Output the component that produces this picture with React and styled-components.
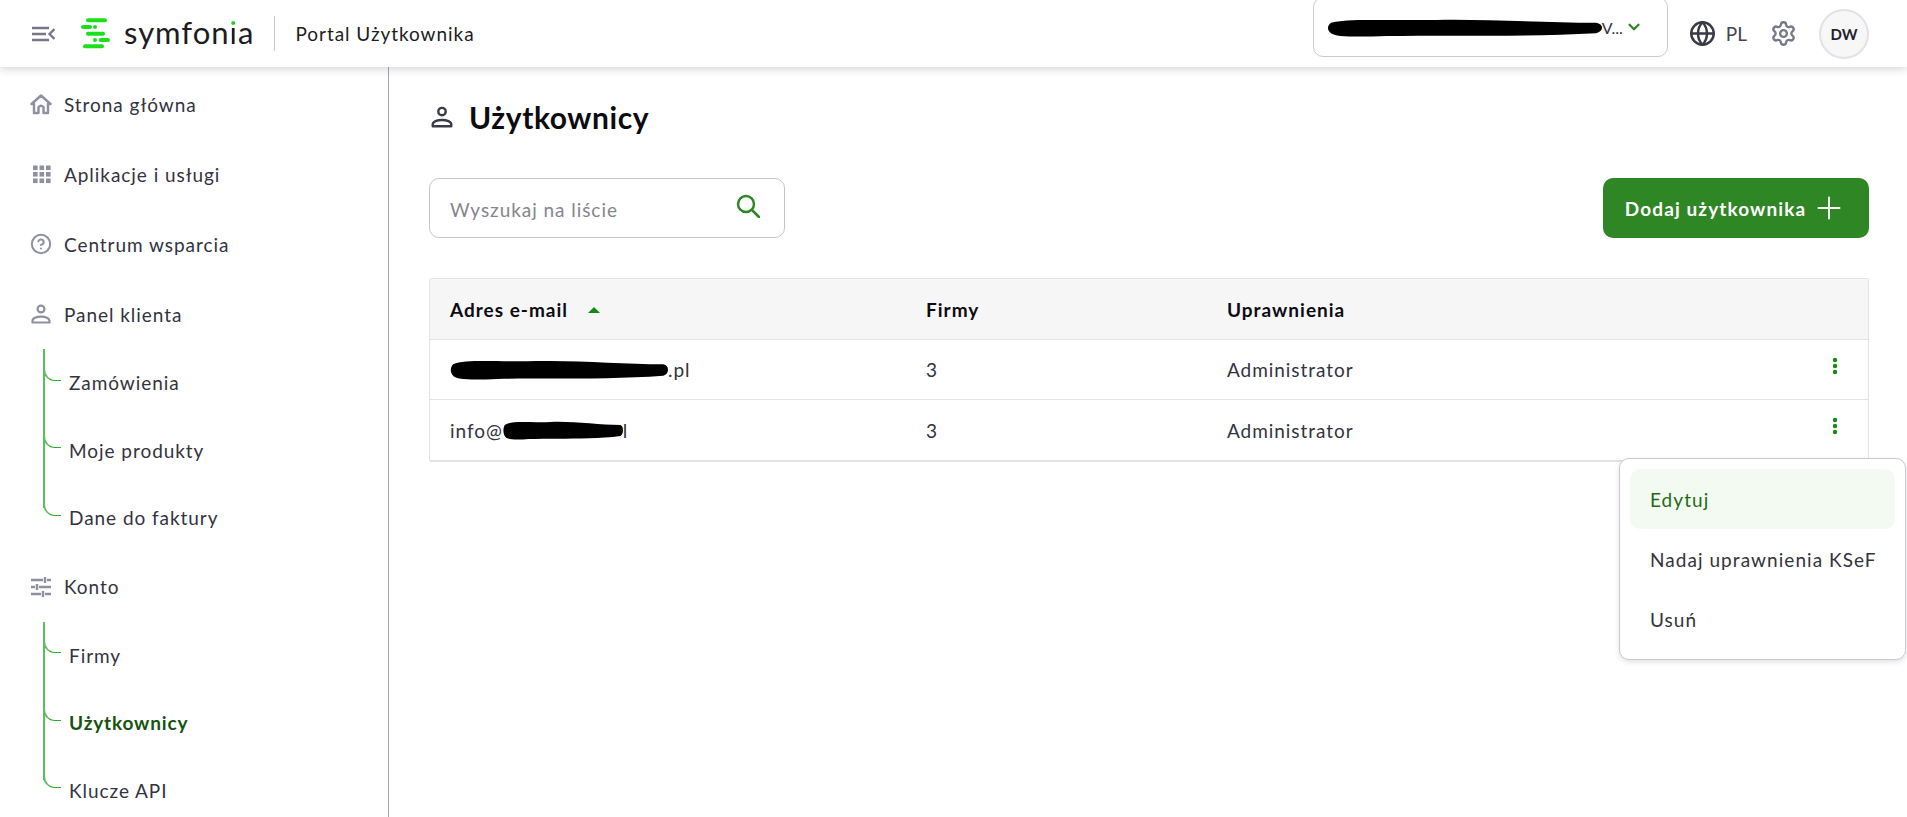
import React from "react";
import styled, { createGlobalStyle } from "styled-components";
import { ChevronDown, CircleHelp, Globe, Plus, Settings } from "lucide-react";

const FONT = `"Lato", "Noto Sans", sans-serif`;

const Global = createGlobalStyle`
  html, body { margin: 0; padding: 0; height: 100%; overflow: hidden; background: #fff; }
  body { font-family: ${FONT}; color: #2c2c36; }
  * { box-sizing: border-box; }
`;

const Page = styled.div`
  height: 100vh;
  display: flex;
  flex-direction: column;
  overflow: hidden;
`;

const Header = styled.header`
  flex: 0 0 67px;
  height: 67px;
  display: flex;
  align-items: center;
  padding: 0 38px 0 32px;
  background: #fff;
  box-shadow: 0 2px 8px rgba(60, 60, 80, 0.22);
  position: relative;
  z-index: 2;
`;

const MenuButton = styled.svg`
  width: 23px;
  height: 16px;
  margin-right: 26px;
  color: #777789;
`;

const LogoMark = styled.svg`
  width: 30px;
  height: 31px;
  margin-top: -1px;
  margin-right: 13px;
`;

const Wordmark = styled.span`
  font-size: 31px;
  font-family: "Lato", sans-serif;
  font-weight: 400;
  color: #1c1c22;
  line-height: 1;
  letter-spacing: 1px;
  margin-top: -3px;
`;

const WordDot = styled.span`
  background: linear-gradient(#1fd61f 0 36%, #1c1c22 36% 100%);
  -webkit-background-clip: text;
  background-clip: text;
  color: transparent;
`;

const Divider = styled.span`
  width: 1px;
  height: 35px;
  background: #c6c6d0;
  margin: 0 20px 0 20px;
`;

const PortalName = styled.span`
  font-size: 19px;
  letter-spacing: 0.95px;
  color: #1d1d24;
`;

const Spacer = styled.div`
  flex: 1;
`;

const CompanySelect = styled.div`
  width: 355px;
  height: 60px;
  margin-top: -13px;
  border: 1px solid #c9c9d3;
  border-radius: 10px;
  display: flex;
  align-items: center;
  padding: 0 24px 0 13px;
  font-size: 16px;
  color: #33333d;
  margin-right: 21px;
`;

const Blob = styled.svg`
  display: inline-block;
  flex: none;
  width: ${(p) => p.$w}px;
  height: ${(p) => p.$h}px;
  vertical-align: middle;
  color: #000;
`;

const CompanyTail = styled.span`
  flex: 1;
  white-space: nowrap;
`;

const Lang = styled.div`
  display: flex;
  align-items: center;
  gap: 10px;
  font-size: 19px;
  color: #44444f;
  margin-right: 23px;
`;

const AvatarCircle = styled.div`
  width: 50px;
  height: 50px;
  border-radius: 50%;
  background: #f7f7f8;
  border: 2px solid #e2e2e8;
  display: flex;
  align-items: center;
  justify-content: center;
  font-size: 15px;
  font-weight: 700;
  color: #22222c;
  margin-left: 22px;
`;

const Body = styled.div`
  flex: 1;
  display: flex;
  min-height: 0;
`;

const Sidebar = styled.nav`
  flex: 0 0 389px;
  border-right: 1px solid #a4a4b6;
  padding-top: 2px;
`;

const NavItem = styled.div`
  height: 70px;
  display: flex;
  align-items: center;
  padding-left: 30px;
  gap: 12px;
  font-size: 19px;
  letter-spacing: 0.95px;
  color: #33333f;
  & > svg {
    flex: none;
    width: 22px;
    height: 22px;
    color: #8f8fa2;
  }
`;

const SubList = styled.div`
  margin-left: 43px;
`;

const SubItem = styled.div`
  height: 67.5px;
  display: flex;
  align-items: center;
  padding-left: 26px;
  font-size: 19px;
  letter-spacing: ${(p) => (p.$active ? "0.85px" : "0.95px")};
  font-weight: ${(p) => (p.$active ? 700 : 400)};
  color: ${(p) => (p.$active ? "#15530f" : "#33333f")};
  position: relative;
  &::before {
    content: "";
    position: absolute;
    left: 0;
    top: 0;
    bottom: 0;
    width: 2px;
    background: #5bc05b;
  }
  &:last-child::before {
    bottom: 50%;
    margin-bottom: 10px;
  }
  &::after {
    content: "";
    position: absolute;
    left: 0;
    top: calc(50% - 17px);
    width: 16px;
    height: 14px;
    border-left: 2px solid #5bc05b;
    border-bottom: 1.5px solid #2eaa2e;
    border-bottom-left-radius: 12px;
  }
`;

const Main = styled.main`
  flex: 1;
  padding: 28px 38px 0 40px;
  min-width: 0;
`;

const TitleRow = styled.div`
  height: 44px;
  display: flex;
  align-items: center;
  gap: 15px;
  margin-bottom: 39px;
  padding-left: 1px;
  & > svg {
    width: 24px;
    height: 24px;
    color: #3a3a48;
  }
`;

const Title = styled.h1`
  margin: 0;
  font-size: 30px;
  font-weight: 700;
  color: #0b0b10;
  letter-spacing: 0.6px;
`;

const Toolbar = styled.div`
  display: flex;
  justify-content: space-between;
  align-items: center;
  margin-bottom: 40px;
`;

const SearchBox = styled.div`
  width: 356px;
  height: 60px;
  border: 1px solid #c4c4ce;
  border-radius: 10px;
  display: flex;
  align-items: center;
  justify-content: space-between;
  padding: 2px 24px 0 20px;
  font-size: 19px;
  letter-spacing: 0.95px;
  color: #85858f;
  & > svg {
    width: 24px;
    height: 24px;
    color: #2e8624;
    margin-top: -6px;
  }
`;

const AddButton = styled.button`
  width: 266px;
  height: 60px;
  border: none;
  border-radius: 10px;
  background: #2e8624;
  color: #fff;
  font-family: ${FONT};
  font-size: 19px;
  font-weight: 700;
  letter-spacing: 1.1px;
  display: flex;
  align-items: center;
  justify-content: center;
  gap: 5px;
  & > svg {
    width: 36px;
    height: 36px;
  }
`;

const TableWrap = styled.div`
  position: relative;
`;

const Table = styled.div`
  border: 1px solid #e2e2e8;
  border-bottom: 2px solid #e0e0e8;
  border-radius: 3px;
`;

const Row = styled.div`
  height: ${(p) => (p.$head || p.$first ? "60px" : "61px")};
  display: grid;
  grid-template-columns: 476px 301px 1fr 60px;
  align-items: center;
  padding-left: 20px;
  font-size: 19px;
  letter-spacing: ${(p) => (p.$head ? "1px" : "0.95px")};
  color: ${(p) => (p.$head ? "#0c0c12" : "#33333d")};
  font-weight: ${(p) => (p.$head ? 700 : 400)};
  background: ${(p) => (p.$head ? "#f6f6f7" : "#fff")};
  & + & {
    border-top: ${(p) => (p.$first ? "none" : "1px solid #e2e2e8")};
  }
`;

const Email = styled.div`
  display: flex;
  align-items: center;
`;

const SortArrow = styled.span`
  display: inline-block;
  width: 0;
  height: 0;
  margin-left: 20px;
  margin-bottom: 3px;
  border-left: 6px solid transparent;
  border-right: 6px solid transparent;
  border-bottom: 6px solid #128a12;
  vertical-align: middle;
`;

const Dots = styled.svg`
  width: 6px;
  height: 18px;
  color: #158a15;
  justify-self: center;
  margin-top: -8px;
  margin-left: -7px;
`;

const Popup = styled.div`
  position: absolute;
  top: 100%;
  right: -37px;
  margin-top: -4px;
  width: 287px;
  height: 202px;
  padding: 10px;
  background: #fff;
  border: 1px solid #c9c9d3;
  border-radius: 10px;
  box-shadow: 0 2px 5px rgba(60, 60, 80, 0.15);
`;

const PopupItem = styled.div`
  height: 60px;
  display: flex;
  align-items: center;
  padding-left: 20px;
  border-radius: 10px;
  font-size: 19px;
  letter-spacing: 1.05px;
  white-space: nowrap;
  color: ${(p) => (p.$active ? "#1f6a14" : "#33333d")};
  background: ${(p) => (p.$active ? "#f3faf2" : "transparent")};
`;

const BLOB = "M4 5 C20 0 60 3 110 2 C160 1 220 5 270 5 C278 6 278 14 270 16 C200 20 120 18 60 19 C30 20 8 20 4 16 C0 13 0 8 4 5 Z";

const Scribble = ({ w, h }) => (
  <Blob $w={w} $h={h} viewBox="0 0 276 20" preserveAspectRatio="none" aria-hidden="true">
    <path d={BLOB} fill="currentColor" />
  </Blob>
);

const PersonIcon = () => (
  <svg viewBox="0 0 22 22" fill="none" stroke="currentColor" strokeWidth="2.2">
    <circle cx="11" cy="6" r="3.4" />
    <path d="M2.5 19.5 v-1.6 c0-2.6 4-4.2 8.5-4.2 s8.5 1.6 8.5 4.2 v1.6 Z" strokeLinejoin="round" />
  </svg>
);

const HomeIcon = () => (
  <svg viewBox="0 0 22 22" fill="none" stroke="currentColor" strokeWidth="2.4" strokeLinejoin="round">
    <path d="M1.5 11 L11 2.5 L20.5 11 H18 V20 H13.5 V14 Q11 11.5 8.5 14 V20 H4 V11 Z" />
  </svg>
);

const GridIcon = () => (
  <svg viewBox="0 0 22 22" fill="currentColor">
    {[2.5, 9, 15.5].flatMap((y) =>
      [3, 9.5, 16].map((x) => <rect key={`${x}-${y}`} x={x} y={y} width="4.6" height="4.6" />)
    )}
  </svg>
);

const TuneIcon = () => (
  <svg viewBox="0 0 22 22" fill="none" stroke="currentColor" strokeWidth="2.4">
    <path d="M1 4 H13 M17 4 H21 M15 1 V7" />
    <path d="M1 11 H5 M9 11 H21 M7 8 V14" />
    <path d="M1 18 H11 M15 18 H21 M13 15 V21" />
  </svg>
);

const MenuIcon = () => (
  <MenuButton viewBox="0 0 23 16" fill="none" stroke="currentColor" strokeWidth="2.4">
    <path d="M0 2 H17 M0 8 H14 M0 14 H17" />
    <path d="M22.5 3 L17.5 8 L22.5 13" />
  </MenuButton>
);

const SearchIcon = () => (
  <svg viewBox="0 0 24 24" fill="none" stroke="currentColor" strokeWidth="2.5" strokeLinecap="round">
    <circle cx="10" cy="10" r="8" />
    <path d="M16 16 L23 23" />
  </svg>
);

const Logo = () => (
  <LogoMark viewBox="81 12 30 31" fill="#1bdf1b">
    <rect x="86" y="12.3" width="21" height="4" rx="2" />
    <rect x="81" y="19" width="11" height="4" rx="2" />
    <circle cx="95" cy="21" r="2" />
    <rect x="86" y="25.7" width="19" height="4" rx="2" />
    <circle cx="95" cy="34" r="2" />
    <rect x="98.7" y="32" width="11.3" height="4" rx="2" />
    <rect x="83" y="38.3" width="21" height="4" rx="2" />
  </LogoMark>
);

const Dotted = () => (
  <Dots viewBox="0 0 6 18" fill="currentColor">
    <circle cx="3" cy="3" r="2.2" />
    <circle cx="3" cy="9" r="2.2" />
    <circle cx="3" cy="15" r="2.2" />
  </Dots>
);

export default function App() {
  return (
    <Page>
      <Global />
      <Header>
        <MenuIcon />
        <Logo />
        <Wordmark>
          symfon<WordDot>i</WordDot>a
        </Wordmark>
        <Divider />
        <PortalName>Portal Użytkownika</PortalName>
        <Spacer />
        <CompanySelect>
          <Scribble w={275} h={19} />
          <CompanyTail>V...</CompanyTail>
          <ChevronDown size={18} strokeWidth={3} color="#2e8624" />
        </CompanySelect>
        <Lang>
          <Globe size={27} strokeWidth={2.2} color="#3a3a46" />
          PL
        </Lang>
        <Settings size={27} strokeWidth={2.1} color="#777789" />
        <AvatarCircle>DW</AvatarCircle>
      </Header>
      <Body>
        <Sidebar>
          <NavItem><HomeIcon />Strona główna</NavItem>
          <NavItem><GridIcon />Aplikacje i usługi</NavItem>
          <NavItem><CircleHelp strokeWidth={2.2} />Centrum wsparcia</NavItem>
          <NavItem><PersonIcon />Panel klienta</NavItem>
          <SubList>
            <SubItem>Zamówienia</SubItem>
            <SubItem>Moje produkty</SubItem>
            <SubItem>Dane do faktury</SubItem>
          </SubList>
          <NavItem><TuneIcon />Konto</NavItem>
          <SubList>
            <SubItem>Firmy</SubItem>
            <SubItem $active>Użytkownicy</SubItem>
            <SubItem>Klucze API</SubItem>
          </SubList>
        </Sidebar>
        <Main>
          <TitleRow>
            <PersonIcon />
            <Title>Użytkownicy</Title>
          </TitleRow>
          <Toolbar>
            <SearchBox>
              Wyszukaj na liście
              <SearchIcon />
            </SearchBox>
            <AddButton>
              Dodaj użytkownika
              <Plus strokeWidth={1.3} />
            </AddButton>
          </Toolbar>
          <TableWrap>
            <Table>
              <Row $head>
                <div>Adres e-mail<SortArrow /></div>
                <div>Firmy</div>
                <div>Uprawnienia</div>
                <div />
              </Row>
              <Row $first>
                <Email><Scribble w={218} h={21} />.pl</Email>
                <div>3</div>
                <div>Administrator</div>
                <Dotted />
              </Row>
              <Row>
                <Email>info@<Scribble w={120} h={20} />l</Email>
                <div>3</div>
                <div>Administrator</div>
                <Dotted />
              </Row>
            </Table>
            <Popup>
              <PopupItem $active>Edytuj</PopupItem>
              <PopupItem>Nadaj uprawnienia KSeF</PopupItem>
              <PopupItem>Usuń</PopupItem>
            </Popup>
          </TableWrap>
        </Main>
      </Body>
    </Page>
  );
}
